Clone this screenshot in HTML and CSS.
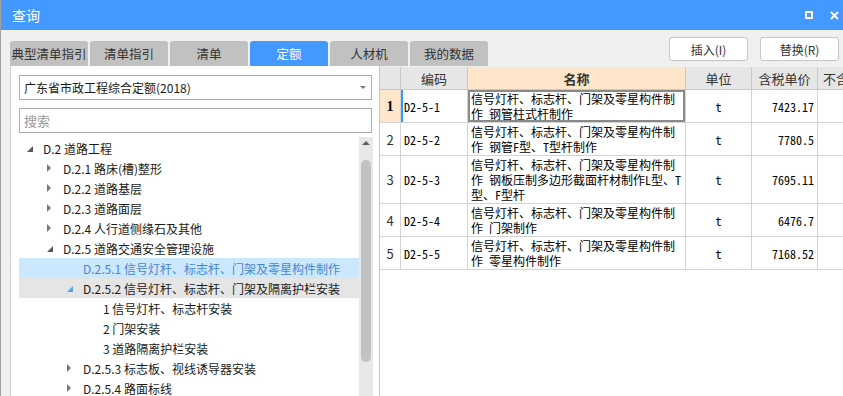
FILE: index.html
```html
<!DOCTYPE html>
<html lang="zh-CN">
<head>
    <meta charset="UTF-8">
    <title>查询</title>
    <link rel="stylesheet" href="styles.css">
</head>
<body>
    <div class="window">
        <div class="titlebar">
            <span class="title">查询</span>
            <div class="win-btns">
                <span class="btn-max"></span>
                <svg class="btn-close" width="9" height="9" viewBox="0 0 9 9"><path d="M1 1L8 8M8 1L1 8" stroke="#fff" stroke-width="1.8"/></svg>
            </div>
        </div>

        <div class="toolbar">
            <div class="tabs">
                <div class="tab">典型清单指引</div>
                <div class="tab">清单指引</div>
                <div class="tab">清单</div>
                <div class="tab active">定额</div>
                <div class="tab">人材机</div>
                <div class="tab">我的数据</div>
            </div>
            <div class="actions">
                <button class="btn">插入(I)</button>
                <button class="btn">替换(R)</button>
            </div>
        </div>

        <div class="main">
            <div class="side">
                <div class="select">广东省市政工程综合定额(2018)<span class="caret"></span></div>
                <input class="search" type="text" placeholder="搜索">
                <div class="tree-wrap">
                    <ul class="tree">
                        <li class="node lv1"><span class="tog open"></span>D.2 道路工程</li>
                        <li class="node lv2"><span class="tog closed"></span>D.2.1 路床(槽)整形</li>
                        <li class="node lv2"><span class="tog closed"></span>D.2.2 道路基层</li>
                        <li class="node lv2"><span class="tog closed"></span>D.2.3 道路面层</li>
                        <li class="node lv2"><span class="tog closed"></span>D.2.4 人行道侧缘石及其他</li>
                        <li class="node lv2"><span class="tog open"></span>D.2.5 道路交通安全管理设施</li>
                        <li class="node lv3 selected"><span class="tog"></span>D.2.5.1 信号灯杆、标志杆、门架及零星构件制作</li>
                        <li class="node lv3 hover"><span class="tog open"></span>D.2.5.2 信号灯杆、标志杆、门架及隔离护栏安装</li>
                        <li class="node lv4"><span class="tog"></span>1 信号灯杆、标志杆安装</li>
                        <li class="node lv4"><span class="tog"></span>2 门架安装</li>
                        <li class="node lv4"><span class="tog"></span>3 道路隔离护栏安装</li>
                        <li class="node lv3"><span class="tog closed"></span>D.2.5.3 标志板、视线诱导器安装</li>
                        <li class="node lv3"><span class="tog closed"></span>D.2.5.4 路面标线</li>
                    </ul>
                    <div class="scrollbar">
                        <span class="sb-up"></span>
                        <span class="sb-thumb"></span>
                    </div>
                </div>
            </div>

            <div class="grid">
                <table>
                    <thead>
                        <tr>
                            <th class="c-no"></th>
                            <th class="c-code">编码</th>
                            <th class="c-name">名称</th>
                            <th class="c-unit">单位</th>
                            <th class="c-price">含税单价</th>
                            <th class="c-more">不含税单价</th>
                        </tr>
                    </thead>
                    <tbody>
                        <tr class="current">
                            <td class="c-no">1</td>
                            <td class="c-code">D2-5-1</td>
                            <td class="c-name">信号灯杆、标志杆、门架及零星构件制作 钢管柱式杆制作</td>
                            <td class="c-unit">t</td>
                            <td class="c-price">7423.17</td>
                            <td class="c-more"></td>
                        </tr>
                        <tr>
                            <td class="c-no">2</td>
                            <td class="c-code">D2-5-2</td>
                            <td class="c-name">信号灯杆、标志杆、门架及零星构件制作 钢管F型、T型杆制作</td>
                            <td class="c-unit">t</td>
                            <td class="c-price">7780.5</td>
                            <td class="c-more"></td>
                        </tr>
                        <tr>
                            <td class="c-no">3</td>
                            <td class="c-code">D2-5-3</td>
                            <td class="c-name">信号灯杆、标志杆、门架及零星构件制作 钢板压制多边形截面杆材制作L型、T型、F型杆</td>
                            <td class="c-unit">t</td>
                            <td class="c-price">7695.11</td>
                            <td class="c-more"></td>
                        </tr>
                        <tr>
                            <td class="c-no">4</td>
                            <td class="c-code">D2-5-4</td>
                            <td class="c-name">信号灯杆、标志杆、门架及零星构件制作 门架制作</td>
                            <td class="c-unit">t</td>
                            <td class="c-price">6476.7</td>
                            <td class="c-more"></td>
                        </tr>
                        <tr>
                            <td class="c-no">5</td>
                            <td class="c-code">D2-5-5</td>
                            <td class="c-name">信号灯杆、标志杆、门架及零星构件制作 零星构件制作</td>
                            <td class="c-unit">t</td>
                            <td class="c-price">7168.52</td>
                            <td class="c-more"></td>
                        </tr>
                    </tbody>
                </table>
            </div>
        </div>
    </div>
</body>
</html>
```

FILE: styles.css
```css
* {
    box-sizing: border-box;
}
body {
    margin: 0;
    font-family: "Noto Sans CJK SC", sans-serif;
    font-size: 12px;
    color: #1a1a1a;
    background: #f0f0f0;
}
.window {
    width: 843px;
    height: 396px;
    overflow: hidden;
    background: #f0f0f0;
    border-left: 1px solid #a0a0a0;
    display: flex;
    flex-direction: column;
}

/* title bar */
.titlebar {
    height: 30px;
    flex: none;
    background: #4399ff;
    color: #fff;
    display: flex;
    align-items: center;
    padding: 0 4px 0 11px;
}
.title {
    font-size: 14px;
}
.win-btns {
    margin-left: auto;
    display: flex;
    align-items: center;
    gap: 17px;
}
.btn-max {
    width: 8px;
    height: 8px;
    border: 2px solid #fff;
}

/* tabs + buttons */
.toolbar {
    height: 36px;
    flex: none;
    display: flex;
    padding-left: 9px;
}
.tabs {
    display: flex;
    gap: 2px;
    align-self: flex-end;
}
.tab {
    width: 78px;
    height: 25px;
    background: #c1c1c1;
    border-radius: 3px 3px 0 0;
    display: flex;
    align-items: center;
    justify-content: center;
    font-size: 12.5px;
    color: #333;
    white-space: nowrap;
}
.tab.active {
    background: #4399ff;
    color: #fff;
}
.actions {
    margin-left: auto;
    padding: 7px 4px 0 0;
    display: flex;
    gap: 12px;
    align-items: flex-start;
}
.btn {
    width: 79px;
    height: 24px;
    background: #fff;
    border: 1px solid #c6c6c6;
    border-radius: 3px;
    font-family: inherit;
    font-size: 12px;
    color: #333;
    padding: 0;
}

/* left side */
.main {
    flex: 1;
    display: flex;
    min-height: 0;
}
.side {
    width: 370px;
    flex: none;
    margin-left: 9px;
    background: #fff;
    border-left: 1px solid #d0d0d0;
    border-right: 1px solid #c4c4c4;
    padding: 9px 6px 0 8px;
    display: flex;
    flex-direction: column;
}
.select {
    width: 353px;
    height: 25px;
    flex: none;
    border: 1px solid #abadb3;
    display: flex;
    align-items: center;
    padding: 0 5px 0 4px;
}
.caret {
    margin-left: auto;
    border-left: 3px solid transparent;
    border-right: 3px solid transparent;
    border-top: 3px solid #7a7a7a;
}
.search {
    width: 353px;
    height: 25px;
    flex: none;
    margin-top: 8px;
    border: 1px solid #abadb3;
    padding: 0 4px;
    font-family: inherit;
    font-size: 13px;
    outline: none;
}
.search::placeholder {
    color: #9a9a9a;
}
.tree-wrap {
    flex: 1;
    display: flex;
    margin-top: 4px;
    min-height: 0;
}
.tree {
    width: 340px;
    list-style: none;
    margin: 0;
    padding: 1px 0 0;
}
.node {
    height: 20px;
    display: flex;
    align-items: center;
    white-space: nowrap;
}
.lv1 { padding-left: 8px; }
.lv2 { padding-left: 28px; }
.lv3 { padding-left: 48px; }
.lv4 { padding-left: 68px; }
.tog {
    width: 16px;
    height: 20px;
    flex: none;
    display: flex;
    align-items: center;
}
.tog.closed::before {
    content: "";
    border-left: 4px solid #7a7a7a;
    border-top: 4px solid transparent;
    border-bottom: 4px solid transparent;
}
.tog.open::before {
    content: "";
    margin-top: 2px;
    border-left: 6px solid transparent;
    border-bottom: 6px solid #5a5a5a;
}
.node.selected {
    background: #cce8ff;
    color: #4884d2;
}
.node.hover {
    background: #e5e5e5;
}
.node.hover .tog.open::before {
    border-bottom-color: #4fa3f0;
}
.scrollbar {
    width: 14px;
    flex: none;
    background: #e8e8e8;
    display: flex;
    flex-direction: column;
    align-items: center;
    padding-top: 4px;
}
.sb-up {
    border-left: 4px solid transparent;
    border-right: 4px solid transparent;
    border-bottom: 4px solid #606060;
}
.sb-thumb {
    width: 10px;
    height: 202px;
    margin-top: 15px;
    background: #c2c2c2;
    border-radius: 5px;
}

/* right grid */
.grid {
    flex: 1;
    min-width: 0;
    margin-top: 1px;
    background: #fff;
    overflow: hidden;
}
table {
    width: 498px;
    table-layout: fixed;
    border-collapse: separate;
    border-spacing: 0;
}
th, td {
    border-right: 1px solid #d4d4d4;
    border-bottom: 1px solid #d4d4d4;
}
th {
    height: 23px;
    background: #e6e6e6;
    font-size: 13px;
    font-weight: normal;
    color: #333;
    white-space: nowrap;
    overflow: hidden;
    border-color: #c8c8c8;
    padding: 0;
}
th.c-name {
    background: #fde6c9;
    font-weight: bold;
}
th.c-more {
    text-align: left;
    padding-left: 5px;
}
.c-no { width: 21px; }
.c-code { width: 67px; }
.c-name { width: 218px; }
.c-unit { width: 66px; }
.c-price { width: 66px; }
.c-more { width: 60px; }
td {
    font-family: "Noto Sans Mono CJK SC", "Noto Sans CJK SC", monospace;
    font-size: 12px;
    line-height: 15px;
    padding: 1px 3px;
    color: #000;
    vertical-align: middle;
}
td.c-no {
    background: #fff;
    text-align: center;
    padding: 0;
    font-family: "Noto Sans CJK SC", sans-serif;
    font-size: 13px;
    color: #333;
}
td.c-unit {
    text-align: center;
}
td.c-price {
    text-align: right;
}
.current td.c-no {
    background: #fde6c9;
    font-family: "Liberation Serif", serif;
    font-weight: bold;
    font-size: 14px;
    color: #000;
}
.current td.c-code {
    box-shadow: inset 2px 0 #3399ff;
}
.current td.c-name {
    box-shadow: inset 0 0 0 2px #8a8a8a;
}
```
